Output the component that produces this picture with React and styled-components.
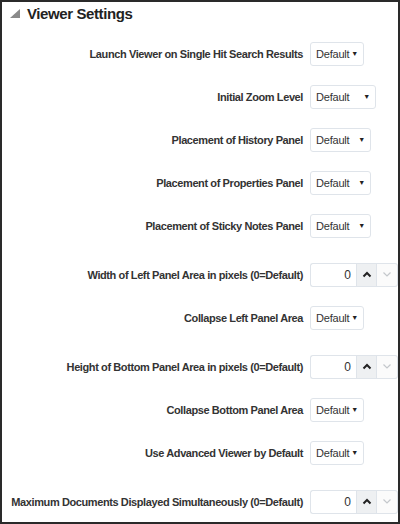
import styled, { createGlobalStyle } from 'styled-components';

const GlobalStyle = createGlobalStyle`
    html, body {
        margin: 0;
        padding: 0;
        background: #ffffff;
    }
    body {
        font-family: "Liberation Sans", Arial, sans-serif;
    }
`;

const Frame = styled.div`
    box-sizing: border-box;
    width: 400px;
    height: 524px;
    border: 2px solid #2a2a2a;
    background: #fff;
    overflow: hidden;
`;

const Header = styled.div`
    display: flex;
    align-items: center;
    gap: 7px;
    padding: 0 0 0 8px;
    height: 22px;
`;

const Title = styled.h2`
    margin: 0;
    font-size: 15px;
    letter-spacing: -0.4px;
    font-weight: bold;
    color: #222;
`;

const Settings = styled.div`
    display: grid;
    grid-template-columns: 301px 1fr;
    column-gap: 7px;
    padding-top: 8px;
`;

const Label = styled.div`
    display: flex;
    align-items: center;
    justify-content: flex-end;
    height: 43px;
    margin-top: ${props => (props.$spin ? '6px' : '0')};
    font-size: 11px;
    letter-spacing: -0.4px;
    font-weight: bold;
    color: #333;
    white-space: nowrap;
`;

const Cell = styled.div`
    display: flex;
    align-items: center;
    height: 43px;
    margin-top: ${props => (props.$spin ? '6px' : '0')};
`;

const Select = styled.div`
    box-sizing: border-box;
    display: flex;
    align-items: center;
    justify-content: space-between;
    width: ${props => props.$w}px;
    height: 24px;
    padding: 0 5px 0 5px;
    border: 1px solid #dfe4ea;
    border-radius: 3px;
    background: #fff;
    font-size: 11px;
    letter-spacing: -0.2px;
    color: #333;
`;

const Arrow = styled.span`
    font-size: 7px;
    color: #222;
`;

const Spinner = styled.div`
    display: flex;
    height: 24px;
`;

const NumInput = styled.div`
    box-sizing: border-box;
    width: 46px;
    height: 24px;
    padding-right: 5px;
    border: 1px solid #dfe4ea;
    border-right: none;
    border-radius: 3px 0 0 3px;
    display: flex;
    align-items: center;
    justify-content: flex-end;
    font-size: 12px;
    color: #333;
`;

const SpinButton = styled.div`
    box-sizing: border-box;
    width: 21px;
    height: 24px;
    display: flex;
    align-items: center;
    justify-content: center;
    border: 1px solid #dfe4ea;
    border-left: ${props => (props.$down ? 'none' : '1px solid #dfe4ea')};
    border-radius: ${props => (props.$down ? '0 3px 3px 0' : '0')};
    background: ${props => (props.$down ? '#fbfbfb' : '#eef0f2')};
`;

const Triangle = () => (
    <svg width="10" height="9" viewBox="0 0 10 9">
        <polygon points="10,0 10,9 0,9" fill="#8a8a8a" />
    </svg>
);

const Chevron = ({ up }) => (
    <svg width="10" height="7" viewBox="0 0 10 7">
        <polyline
            points={up ? '1.5,5.5 5,2 8.5,5.5' : '1.5,1.5 5,5 8.5,1.5'}
            fill="none"
            stroke={up ? '#222' : '#c4c8cc'}
            strokeWidth={up ? 2 : 1.2}
        />
    </svg>
);

const rows = [
    { label: 'Launch Viewer on Single Hit Search Results', w: 54 },
    { label: 'Initial Zoom Level', w: 66 },
    { label: 'Placement of History Panel', w: 61 },
    { label: 'Placement of Properties Panel', w: 61 },
    { label: 'Placement of Sticky Notes Panel', w: 61 },
    { label: 'Width of Left Panel Area in pixels (0=Default)', spin: true },
    { label: 'Collapse Left Panel Area', w: 54 },
    { label: 'Height of Bottom Panel Area in pixels (0=Default)', spin: true },
    { label: 'Collapse Bottom Panel Area', w: 54 },
    { label: 'Use Advanced Viewer by Default', w: 54 },
    { label: 'Maximum Documents Displayed Simultaneously (0=Default)', spin: true },
];

const App = () => (
    <>
        <GlobalStyle />
        <Frame>
            <Header>
                <Triangle />
                <Title>Viewer Settings</Title>
            </Header>
            <Settings>
                {rows.map(row => [
                    <Label key={row.label + 'l'} $spin={row.spin}>{row.label}</Label>,
                    <Cell key={row.label + 'c'} $spin={row.spin}>
                        {row.spin ? (
                            <Spinner>
                                <NumInput>0</NumInput>
                                <SpinButton><Chevron up /></SpinButton>
                                <SpinButton $down><Chevron /></SpinButton>
                            </Spinner>
                        ) : (
                            <Select $w={row.w}>
                                Default <Arrow>▼</Arrow>
                            </Select>
                        )}
                    </Cell>,
                ])}
            </Settings>
        </Frame>
    </>
);

export default App;
